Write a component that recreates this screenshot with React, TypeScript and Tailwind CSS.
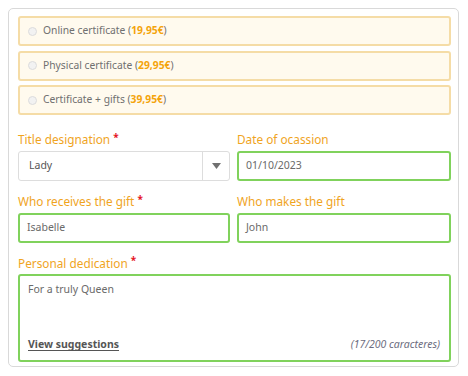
import React from "react";

const options = [
  { label: "Online certificate", price: "19,95€" },
  { label: "Physical certificate", price: "29,95€" },
  { label: "Certificate + gifts", price: "39,95€" },
];

const Label: React.FC<{ text: string; required?: boolean }> = ({ text, required }) => (
  <div className="h-[16px] mb-[3.5px] flex items-center text-[11.8px] leading-[16px] text-[#f0a41e]">
    {text}
    {required && <span className="ml-[3px] text-[#e5141e] text-[10px] -mt-[5px] font-bold">*</span>}
  </div>
);

const Field: React.FC<{ value: string }> = ({ value }) => (
  <div className="h-[30px] border-2 border-[#80d25c] rounded-[3px] flex items-center px-[7px] text-[10.5px] text-[#6a6a6a]">
    {value}
  </div>
);

const App: React.FC = () => {
  return (
    <div
      className="w-[468px] h-[376px] bg-white pt-[8px] pl-[8px] pr-[9px]"
      style={{ fontFamily: '"Noto Sans", "Open Sans", sans-serif' }}
    >
      <div className="h-[359px] border border-[#d9d9d9] rounded-[5px] pt-[7px] pl-[9px] pr-[7px]">
        <div className="flex flex-col gap-[4.5px]">
          {options.map((o) => (
            <div
              key={o.label}
              className="h-[30px] bg-[#fffaee] border-2 border-[#f5dca6] rounded-[3px] flex items-center pl-[8px] text-[10.3px] text-[#707070]"
            >
              <span className="w-[9px] h-[9px] rounded-full bg-[#f2f2f2] border border-[#dcdcdc] mr-[6px]" />
              <span>
                {o.label} (<span className="font-bold text-[#f4a40c]">{o.price}</span>)
              </span>
            </div>
          ))}
        </div>

        <div className="grid grid-cols-[212px_214px] gap-x-[7px] mt-[16px]">
          <div>
            <Label text="Title designation" required />
            <div className="h-[30px] border border-[#dddddd] rounded-[3px] flex items-center text-[10.5px] text-[#555555]">
              <span className="flex-1 pl-[10px]">Lady</span>
              <div className="w-[27px] h-full border-l border-[#dddddd] flex items-center justify-center">
                <svg width="9" height="6" viewBox="0 0 9 6">
                  <path d="M0 0 L9 0 L4.5 6 Z" fill="#707070" />
                </svg>
              </div>
            </div>
          </div>
          <div>
            <Label text="Date of ocassion" />
            <Field value="01/10/2023" />
          </div>
        </div>

        <div className="grid grid-cols-[212px_214px] gap-x-[7px] mt-[12.5px]">
          <div>
            <Label text="Who receives the gift" required />
            <Field value="Isabelle" />
          </div>
          <div>
            <Label text="Who makes the gift" />
            <Field value="John" />
          </div>
        </div>

        <div className="mt-[12px]">
          <Label text="Personal dedication" required />
          <div className="h-[88px] border-2 border-[#80d25c] rounded-[3px] flex flex-col justify-between px-[8px] pt-[6px] pb-[7px]">
            <div className="text-[10.5px] text-[#6a6a6a]">For a truly Queen</div>
            <div className="flex items-end justify-between">
              <span className="text-[10.5px] font-bold text-[#555555] underline underline-offset-2">View suggestions</span>
              <span className="text-[10.5px] italic text-[#6d6d80] mr-[1px]">(17/200 caracteres)</span>
            </div>
          </div>
        </div>
      </div>
    </div>
  );
};

export default App;
